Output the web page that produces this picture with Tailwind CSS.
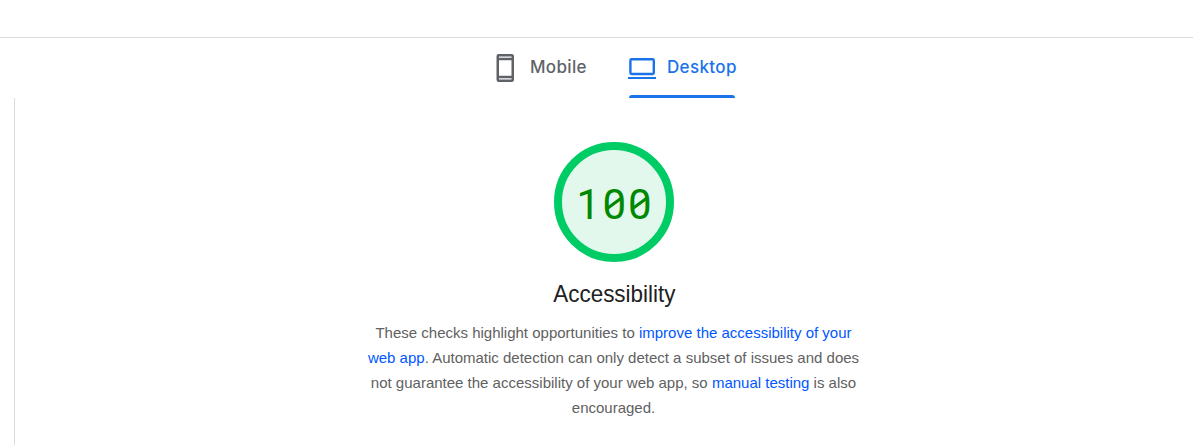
<!DOCTYPE html>
<html lang="en">
<head>
<meta charset="utf-8">
<title>Accessibility</title>
<script src="https://cdn.jsdelivr.net/npm/@tailwindcss/browser@4"></script>
</head>
<body class="bg-white w-[1193px] h-[445px] overflow-hidden font-['Liberation_Sans',Arial,sans-serif]">
<div class="h-[38px] border-b border-[#dadce0]"></div>
<nav class="flex h-[60px] pl-[496px] font-['Inter',sans-serif] font-medium text-[17px] tracking-[0.35px] leading-[24px]">
  <div class="flex w-[133px] text-[#5f6368]">
    <svg class="mt-4 w-[18px] h-7 shrink-0" viewBox="0 0 18 28" fill="currentColor" fill-rule="evenodd"><path d="M2.5 0H15.8Q18 0 18 2.2V25.8Q18 28 15.8 28H2.7Q.5 28 .5 25.8V2.2Q.5 0 2.5 0ZM3 2.6V3.8H15.5V2.6ZM3 6.2V21.8H15.5V6.2ZM3 24.2V25.4H15.5V24.2Z"/></svg>
    <span class="ml-4 mt-[17px]">Mobile</span>
  </div>
  <div class="w-[106px] flex flex-col text-[#1a73e8]">
    <div class="flex h-[57px]">
      <svg class="-ml-px mt-5 w-7 h-[22px] shrink-0" viewBox="0 0 28 22" fill="none" stroke="currentColor" stroke-width="2.4"><rect x="2.4" y="1.2" width="23.4" height="14.8" rx="1.2"/><path d="M0 20H28" stroke-width="2"/></svg>
      <span class="ml-[11px] mt-[17px]">Desktop</span>
    </div>
    <div class="h-[3px] rounded-t-[3px] bg-[#1a73e8]"></div>
  </div>
</nav>
<main class="ml-[14px] h-[347px] border-l border-[#dadce0] pl-[348.5px] pt-11">
  <div class="w-[500px] flex flex-col items-center text-center">
    <div class="size-[120px] ml-px rounded-full border-8 border-[#00cc66] bg-[#e3f8ed] flex items-center justify-center">
      <div class="relative mt-[5px] font-['Roboto',sans-serif] text-[42px] leading-[48px] text-[#008800] flex">
        <span class="w-[26.2px]">1</span><span class="w-[25.6px]">0</span><span class="w-[25.6px]">0</span>
        <svg class="absolute left-0 top-0 w-[77px] h-12" viewBox="0 0 77 48" fill="none" stroke="currentColor" stroke-width="3"><path d="M31.5 28L46.5 17M57 28L72 17"/></svg>
      </div>
    </div>
    <h1 class="mt-[18px] ml-px text-[24px] leading-[28px] text-[#212121] scale-x-[0.935]">Accessibility</h1>
    <p class="mt-3 text-[15px] leading-[25px] text-[#616161] whitespace-nowrap">These checks highlight opportunities to <a class="text-[#0057ff]">improve the accessibility of your</a><br><a class="text-[#0057ff]">web app</a>. Automatic detection can only detect a subset of issues and does<br>not guarantee the accessibility of your web app, so <a class="text-[#0057ff]">manual testing</a> is also<br>encouraged.</p>
  </div>
</main>
</body>
</html>
